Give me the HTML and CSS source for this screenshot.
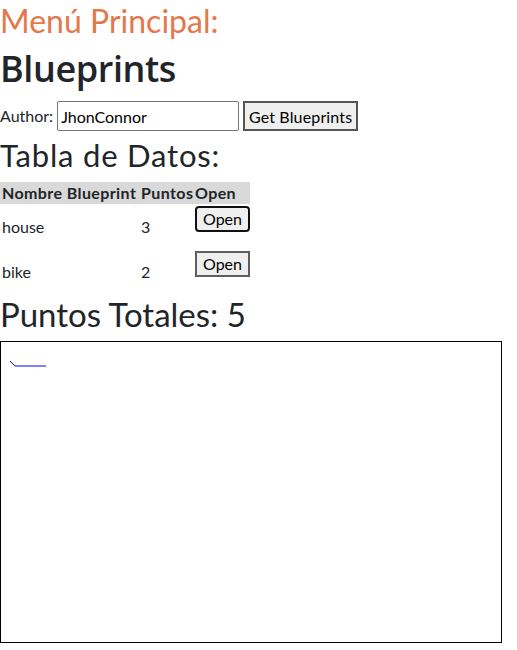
FILE: index.html
```html
<!DOCTYPE html>
<html lang="es">
<head>
<meta charset="utf-8">
<title>Blueprints</title>
<link rel="stylesheet" href="styles.css">
</head>
<body>
<h2 class="menu-title">Menú Principal:</h2>
<h1 class="page-title">Blueprints</h1>
<div class="author-row">
  <label class="author-label" for="author">Author:</label>
  <input id="author" class="author-input" type="text" value="JhonConnor">
  <button class="btn btn-get">Get Blueprints</button>
</div>
<h2 class="section-title">Tabla de Datos:</h2>
<table class="bp-table">
  <colgroup>
    <col class="col-name">
    <col class="col-points">
    <col class="col-open">
  </colgroup>
  <thead>
    <tr>
      <th>Nombre Blueprint</th>
      <th>Puntos</th>
      <th>Open</th>
    </tr>
  </thead>
  <tbody>
    <tr>
      <td>house</td>
      <td>3</td>
      <td class="cell-btn"><button class="btn btn-small btn-focus">Open</button></td>
    </tr>
    <tr>
      <td>bike</td>
      <td>2</td>
      <td class="cell-btn"><button class="btn btn-small">Open</button></td>
    </tr>
  </tbody>
</table>
<h2 class="total-title">Puntos Totales: 5</h2>
<div class="canvas">
  <svg class="canvas-svg" width="500" height="300" viewBox="0 0 500 300">
    <polyline points="9,19 14,24 45,24" fill="none" stroke="#0000ff" stroke-width="1"/>
  </svg>
</div>
</body>
</html>
```
FILE: styles.css
```css
html, body {
  margin: 0;
  padding: 0;
}
body {
  font-family: Lato, "Open Sans", sans-serif;
  font-size: 16px;
  color: #212529;
  background: #fff;
}
.menu-title {
  margin: 0;
  font-size: 32px;
  line-height: 42px;
  font-weight: 400;
  color: #e4784a;
}
.page-title {
  margin: 0 0 5px 0;
  font-family: "Open Sans", Lato, sans-serif;
  font-size: 36px;
  line-height: 54px;
  font-weight: 600;
  letter-spacing: -0.4px;
}
.author-row {
  display: flex;
  align-items: center;
  height: 30px;
  gap: 4px;
}
.author-label {
  line-height: 30px;
}
.author-input {
  box-sizing: border-box;
  width: 182px;
  height: 30px;
  margin: 0;
  padding: 0 3px;
  border: 1px solid #767676;
  border-radius: 2px;
  font-family: inherit;
  font-size: 16px;
  color: #000;
}
.btn {
  box-sizing: border-box;
  height: 30px;
  margin: 0;
  padding: 0;
  background: #efefef;
  border: 2px solid #555;
  border-radius: 0;
  font-family: inherit;
  font-size: 16px;
  color: #000;
  white-space: nowrap;
}
.btn-get {
  width: 115px;
  letter-spacing: 0.15px;
}
.section-title {
  margin: 0 0 3px 0;
  font-size: 31px;
  line-height: 48px;
  font-weight: 400;
  letter-spacing: 0.8px;
}
.bp-table {
  border-collapse: collapse;
  table-layout: fixed;
  width: 250px;
}
.col-name { width: 139px; }
.col-points { width: 54px; }
.col-open { width: 57px; }
.bp-table th {
  background: #d9d9d9;
  font-weight: 700;
  text-align: left;
  height: 22px;
  line-height: 22px;
  padding: 0 0 0 2px;
  white-space: nowrap;
  letter-spacing: 0.4px;
}
.bp-table td {
  height: 45px;
  padding: 0 0 0 2px;
  line-height: 24px;
  vertical-align: middle;
}
.bp-table td.cell-btn {
  vertical-align: top;
  padding-top: 2px;
  box-sizing: border-box;
}
.btn-small {
  width: 55px;
  height: 26px;
  line-height: 20px;
  border-color: #5e5e5e;
}
.btn-focus {
  border-color: #101010;
  border-radius: 4px;
}
.total-title {
  margin: 0 0 7px 0;
  font-size: 33px;
  line-height: 40px;
  font-weight: 400;
}
.canvas {
  width: 500px;
  height: 300px;
  border: 1px solid #000;
}
.canvas-svg {
  display: block;
}
```
